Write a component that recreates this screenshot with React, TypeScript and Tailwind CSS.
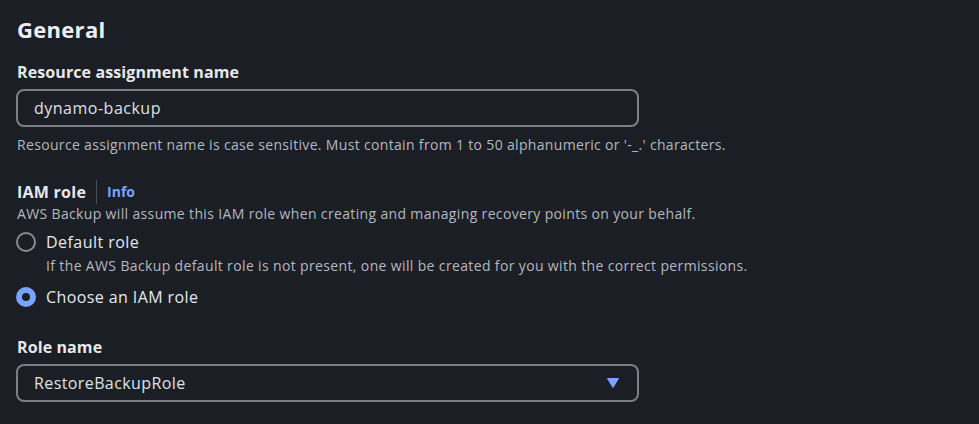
import React from "react";

export default function App() {
  return (
    <div
      className="w-[979px] h-[424px] overflow-hidden bg-[#1b1e25] text-[#e6e8eb]"
      style={{ fontFamily: '"Open Sans", "Noto Sans", sans-serif' }}
    >
      <div className="pl-[16px] pt-[15px]">
        <h2 className="pl-px text-[22px] leading-[28px] font-bold tracking-[0.3px] text-[#eceef1]">General</h2>

        <div className="pl-px mt-[19px] text-[16px] leading-[20px] font-bold tracking-[0.1px] text-[#e6e8eb]">
          Resource assignment name
        </div>
        <div className="mt-[7px] w-[623px] h-[38px] rounded-[8px] border-2 border-[#7d7f86] flex items-center pl-[16px] text-[16px] tracking-[0.5px] text-[#dfe1e5]">
          dynamo-backup
        </div>
        <div className="pl-px mt-[9px] text-[14px] leading-[18px] tracking-[0.33px] text-[#b4b8bf]">
          Resource assignment name is case sensitive. Must contain from 1 to 50 alphanumeric or '-_.' characters.
        </div>

        <div className="pl-px mt-[28px] flex items-center h-[20px]">
          <span className="text-[16px] leading-[20px] font-bold tracking-[0.25px] text-[#e6e8eb]">IAM role</span>
          <span className="mx-[10px] w-px h-[24px] bg-[#4a4e56]" />
          <span className="text-[14px] leading-[20px] font-bold text-[#7aa5ff]">Info</span>
        </div>
        <div className="pl-px mt-[3px] text-[14px] leading-[18px] tracking-[0.35px] text-[#b4b8bf]">
          AWS Backup will assume this IAM role when creating and managing recovery points on your behalf.
        </div>

        <div className="mt-[8px] flex items-center h-[22px]">
          <span className="w-[20px] h-[20px] rounded-full border-2 border-[#8a8c92]" />
          <span className="ml-[10px] text-[16px] leading-[22px] tracking-[0.45px] text-[#e6e8eb]">Default role</span>
        </div>
        <div className="mt-[4px] pl-[30px] text-[14px] leading-[18px] tracking-[0.36px] text-[#b4b8bf]">
          If the AWS Backup default role is not present, one will be created for you with the correct permissions.
        </div>
        <div className="mt-[11px] flex items-center h-[22px]">
          <span className="w-[20px] h-[20px] rounded-full border-[6px] border-[#7aa5ff] bg-[#1b1e25]" />
          <span className="ml-[10px] text-[16px] leading-[22px] tracking-[0.4px] text-[#e6e8eb]">Choose an IAM role</span>
        </div>

        <div className="pl-px mt-[29px] text-[16px] leading-[20px] font-bold tracking-[0.1px] text-[#e6e8eb]">Role name</div>
        <div className="mt-[7px] w-[623px] h-[38px] rounded-[8px] border-2 border-[#7d7f86] flex items-center justify-between pl-[16px] pr-[18px] text-[16px] tracking-[0.4px] text-[#dfe1e5]">
          <span>RestoreBackupRole</span>
          <svg width="12" height="10" viewBox="0 0 12 10">
            <path d="M0.5 0.5 H11.5 L6 9.5 Z" fill="#7aa5ff" stroke="#7aa5ff" strokeLinejoin="round" />
          </svg>
        </div>
      </div>
    </div>
  );
}
